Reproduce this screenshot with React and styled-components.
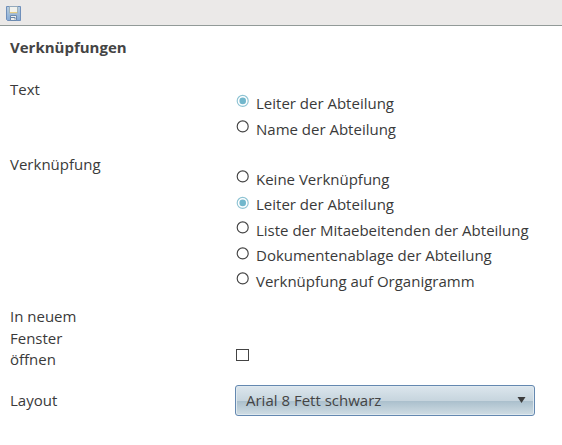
import React, { useState } from "react";
import styled, { createGlobalStyle } from "styled-components";

const GlobalStyle = createGlobalStyle`
  * { box-sizing: border-box; }
  body {
    margin: 0;
    background: #fff;
    color: #3a3a3a;
    font: 15px/21.6px "Open Sans", "Noto Sans", sans-serif;
  }
`;

const Toolbar = styled.header`
  display: flex;
  align-items: flex-start;
  height: 26px;
  padding: 6px 0 0 6px;
  background: #ebe9e8;
  border-bottom: 1px solid #929a98;
`;

const ToolButton = styled.button`
  display: flex;
  padding: 0;
  border: 0;
  background: none;
`;

const Form = styled.form`
  padding: 11px 10px 0;
`;

const Heading = styled.h1`
  margin: 0;
  height: 42px;
  font-size: 15px;
  line-height: 21px;
  font-weight: 700;
  color: #444;
`;

const Row = styled.div`
  display: grid;
  grid-template-columns: 80px 1fr;
  column-gap: 145px;
  height: ${(p) => p.$height}px;
`;

const Label = styled.div`
  padding-top: ${(p) => p.$top || 0}px;
`;

const Options = styled.div`
  display: flex;
  flex-direction: column;
  padding: ${(p) => p.$top}px 0 0 1px;
`;

const Option = styled.label`
  display: flex;
  height: 25.5px;
  gap: 7px;
  white-space: nowrap;
`;

const Mark = styled.svg`
  flex: none;
  width: 13px;
  height: 13px;
  margin-top: 1.2px;
`;

const CheckboxCell = styled.div`
  padding: 43px 0 0 1px;
`;

const Checkbox = styled.button`
  display: block;
  width: 13px;
  height: 12px;
  padding: 0;
  border: 1px solid #444;
  background: #fff;
`;

const Select = styled.button`
  display: flex;
  align-items: center;
  justify-content: space-between;
  width: 300px;
  height: 31px;
  padding: 0 8px 0 10px;
  border: 1px solid #6488b0;
  border-radius: 3px;
  box-shadow: inset 0 0 0 1px #dfe9ef;
  background: linear-gradient(#dce6ed 0%, #c7d5de 50%, #abc0cd 53%, #d0dde4 100%);
  color: #444;
  font: inherit;
`;

function SaveIcon() {
  return (
    <svg width="15" height="15" viewBox="0 0 15 15">
      <defs>
        <linearGradient id="disk" x2="0" y2="1">
          <stop stopColor="#b9cee0" />
          <stop offset="1" stopColor="#86abd6" />
        </linearGradient>
      </defs>
      <path d="M.5.5h14v14H1.5l-1-1z" fill="url(#disk)" stroke="#6f8fba" />
      <path d="M3 1h9v7H3z" fill="#f1f2ee" />
      <path d="M3 .5h9" stroke="#93a9bc" />
      <path d="M3.5 1v7M11.5 1v7" stroke="#a3b3b8" />
      <path d="M4 6.5h7" stroke="#e6cd83" />
      <path d="M3 7.5h9" stroke="#a9bcc8" />
      <path d="M4.5 14.5v-5h6v5z" fill="#eceeed" stroke="#6c8aae" />
      <path d="M5 11.5h4v2" fill="none" stroke="#6785a8" />
    </svg>
  );
}

function Radio({ checked }) {
  return (
    <Mark viewBox="0 0 13 13">
      <circle cx="6.7" cy={checked ? 6.9 : 6.4} r="5.5" fill="#fff" stroke={checked ? "#8fc4d4" : "#444"} strokeWidth="1.15" />
      {checked && <circle cx="6.7" cy="6.9" r="3.3" fill="#72b7cc" />}
    </Mark>
  );
}

function RadioGroup({ items, initial, top }) {
  const [value, setValue] = useState(initial);
  return (
    <Options role="radiogroup" $top={top}>
      {items.map((item) => (
        <Option key={item} role="radio" aria-checked={item === value} onClick={() => setValue(item)}>
          <Radio checked={item === value} />
          <span>{item}</span>
        </Option>
      ))}
    </Options>
  );
}

const texts = ["Leiter der Abteilung", "Name der Abteilung"];
const links = [
  "Keine Verknüpfung",
  "Leiter der Abteilung",
  "Liste der Mitaebeitenden der Abteilung",
  "Dokumentenablage der Abteilung",
  "Verknüpfung auf Organigramm",
];

export default function App() {
  return (
    <>
      <GlobalStyle />
      <Toolbar>
        <ToolButton aria-label="Speichern"><SaveIcon /></ToolButton>
      </Toolbar>
      <Form>
        <Heading>Verknüpfungen</Heading>
        <Row $height={75}>
          <Label>Text</Label>
          <RadioGroup items={texts} initial={texts[0]} top={14.2} />
        </Row>
        <Row $height={152}>
          <Label>Verknüpfung</Label>
          <RadioGroup items={links} initial={links[1]} top={14.9} />
        </Row>
        <Row $height={79}>
          <Label>In neuem Fenster öffnen</Label>
          <CheckboxCell><Checkbox type="button" aria-label="In neuem Fenster öffnen" /></CheckboxCell>
        </Row>
        <Row $height={31}>
          <Label $top={5}>Layout</Label>
          <Select type="button">
            <span>Arial 8 Fett schwarz</span>
            <svg width="9" height="7" viewBox="0 0 9 7"><path d="M.5 0h8L4.5 6z" fill="#3c3c3c" /></svg>
          </Select>
        </Row>
      </Form>
    </>
  );
}
